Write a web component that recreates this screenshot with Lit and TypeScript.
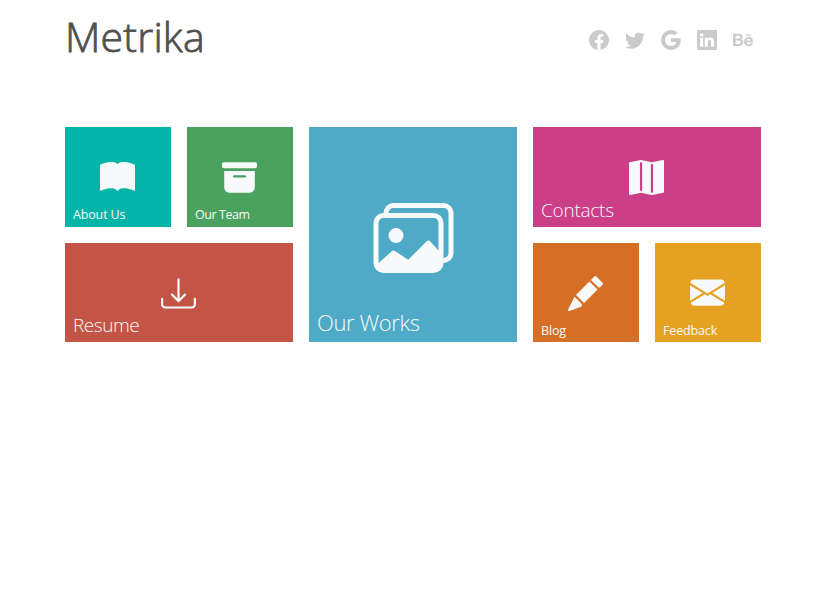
import { LitElement, html, css, svg } from "lit";
import { customElement, property } from "lit/decorators.js";

const ICONS: Record<string, string> = {
  book: "M8 1.783C7.015.936 5.587.81 4.287.94c-1.514.153-3.042.672-3.994 1.105A.5.5 0 0 0 0 2.5v11a.5.5 0 0 0 .707.455c.882-.4 2.303-.881 3.68-1.02 1.409-.142 2.59.087 3.223.877a.5.5 0 0 0 .78 0c.633-.79 1.814-1.019 3.222-.877 1.378.139 2.8.62 3.681 1.02A.5.5 0 0 0 16 13.5v-11a.5.5 0 0 0-.293-.455c-.952-.433-2.48-.952-3.994-1.105C10.413.809 8.985.936 8 1.783",
  archive: "M12.643 15C13.979 15 15 13.845 15 12.5V5H1v7.5C1 13.845 2.021 15 3.357 15zM5.5 7h5a.5.5 0 0 1 0 1h-5a.5.5 0 0 1 0-1M.8 1a.8.8 0 0 0-.8.8V3a.8.8 0 0 0 .8.8h14.4A.8.8 0 0 0 16 3V1.8a.8.8 0 0 0-.8-.8z",
  download: "M.5 9.9a.5.5 0 0 1 .5.5v2.5a1 1 0 0 0 1 1h12a1 1 0 0 0 1-1v-2.5a.5.5 0 0 1 1 0v2.5a2 2 0 0 1-2 2H2a2 2 0 0 1-2-2v-2.5a.5.5 0 0 1 .5-.5M7.646 11.854a.5.5 0 0 0 .708 0l3-3a.5.5 0 0 0-.708-.708L8.5 10.293V1.5a.5.5 0 0 0-1 0v8.793L5.354 8.146a.5.5 0 1 0-.708.708z",
  images: "M4.502 9a1.5 1.5 0 1 0 0-3 1.5 1.5 0 0 0 0 3M14.002 13a2 2 0 0 1-2 2h-10a2 2 0 0 1-2-2V5A2 2 0 0 1 2 3a2 2 0 0 1 2-2h10a2 2 0 0 1 2 2v8a2 2 0 0 1-1.998 2M14 2H4a1 1 0 0 0-1 1h9.002a2 2 0 0 1 2 2v7A1 1 0 0 0 15 11V3a1 1 0 0 0-1-1M2.002 4a1 1 0 0 0-1 1v8l2.646-2.354a.5.5 0 0 1 .63-.062l2.66 1.773 3.71-3.71a.5.5 0 0 1 .577-.094l1.777 1.947V5a1 1 0 0 0-1-1z",
  map: "M16 .5a.5.5 0 0 0-.598-.49L10.5.99 5.598.01a.5.5 0 0 0-.196 0l-5 1A.5.5 0 0 0 0 1.5v14a.5.5 0 0 0 .598.49l4.902-.98 4.902.98a.5.5 0 0 0 .196 0l5-1A.5.5 0 0 0 16 14.5zM5 14.09V1.11l.5-.1.5.1v12.98l-.402-.08a.5.5 0 0 0-.196 0zm5 .8V1.91l.402.08a.5.5 0 0 0 .196 0L11 1.91v12.98l-.5.1z",
  pencil: "M12.854.146a.5.5 0 0 0-.708 0L10.5 1.793 14.207 5.5l1.647-1.646a.5.5 0 0 0 0-.708zM13.5 6.207 9.793 2.5 3.622 8.671 7.329 12.378zM6.4 12.9 3 9.5.036 15.314a.5.5 0 0 0 .65.65L6.2 13.9z",
  envelope: "M.05 3.555A2 2 0 0 1 2 2h12a2 2 0 0 1 1.95 1.555L8 8.414zM0 4.697v7.104l5.803-3.558zM6.761 8.83l-6.57 4.027A2 2 0 0 0 2 14h12a2 2 0 0 0 1.808-1.144l-6.57-4.027L8 9.586zm3.436-.586L16 11.801V4.697z",
  facebook: "M16 8.049c0-4.446-3.582-8.05-8-8.05C3.58 0-.002 3.603-.002 8.05c0 4.017 2.926 7.347 6.75 7.951v-5.625h-2.03V8.05H6.75V6.275c0-2.017 1.195-3.131 3.022-3.131.876 0 1.791.157 1.791.157v1.98h-1.009c-.993 0-1.303.621-1.303 1.258v1.51h2.218l-.354 2.326H9.25V16c3.824-.604 6.75-3.934 6.75-7.951",
  twitter: "M5.026 15c6.038 0 9.341-5.003 9.341-9.334q.002-.211-.006-.422A6.7 6.7 0 0 0 16 3.542a6.7 6.7 0 0 1-1.889.518 3.3 3.3 0 0 0 1.447-1.817 6.5 6.5 0 0 1-2.087.793A3.286 3.286 0 0 0 7.875 6.03a9.32 9.32 0 0 1-6.767-3.429 3.29 3.29 0 0 0 1.018 4.382A3.3 3.3 0 0 1 .64 6.575v.045a3.29 3.29 0 0 0 2.632 3.218 3.2 3.2 0 0 1-.865.115 3 3 0 0 1-.614-.057 3.28 3.28 0 0 0 3.067 2.277A6.6 6.6 0 0 1 .78 13.58a6 6 0 0 1-.78-.045A9.34 9.34 0 0 0 5.026 15",
  google: "M15.545 6.558a9.4 9.4 0 0 1 .139 1.626c0 2.434-.87 4.492-2.384 5.885h.002C11.978 15.292 10.158 16 8 16A8 8 0 1 1 8 0a7.7 7.7 0 0 1 5.352 2.082l-2.284 2.284A4.35 4.35 0 0 0 8 3.166c-2.087 0-3.86 1.408-4.492 3.304a4.8 4.8 0 0 0 0 3.063h.003c.635 1.893 2.405 3.301 4.492 3.301 1.078 0 2.004-.276 2.722-.764h-.003a3.7 3.7 0 0 0 1.599-2.431H8v-3.08z",
  linkedin: "M0 1.146C0 .513.526 0 1.175 0h13.65C15.474 0 16 .513 16 1.146v13.708c0 .633-.526 1.146-1.175 1.146H1.175C.526 16 0 15.487 0 14.854zm4.943 12.248V6.169H2.542v7.225zm-1.2-8.212c.837 0 1.358-.554 1.358-1.248-.015-.709-.52-1.248-1.342-1.248S2.4 3.226 2.4 3.934c0 .694.521 1.248 1.327 1.248zm4.908 8.212V9.359c0-.216.016-.432.08-.586.173-.431.568-.878 1.232-.878.869 0 1.216.662 1.216 1.634v3.865h2.401V9.25c0-2.22-1.184-3.252-2.764-3.252-1.274 0-1.845.7-2.165 1.193v.025h-.016l.016-.025V6.169h-2.4c.03.678 0 7.225 0 7.225z",
  behance: "M4.654 3c.461 0 .887.035 1.278.14.39.07.711.216.996.391s.497.426.641.747c.14.32.216.711.216 1.137 0 .496-.106.922-.356 1.242-.215.32-.566.606-.997.817.606.176 1.067.496 1.348.922s.461.957.461 1.563c0 .496-.105.922-.285 1.278a2.3 2.3 0 0 1-.782.887c-.32.215-.711.39-1.137.496a5.3 5.3 0 0 1-1.278.176L0 12.803V3zm-.285 3.978c.39 0 .71-.105.957-.285.246-.18.355-.497.355-.887 0-.216-.035-.426-.105-.567a1 1 0 0 0-.32-.355 1.8 1.8 0 0 0-.461-.176c-.176-.035-.356-.035-.567-.035H2.17v2.31c0-.005 2.2-.005 2.2-.005zm.105 4.193c.215 0 .426-.035.606-.07.176-.035.356-.106.496-.216s.25-.215.356-.39c.07-.176.14-.391.14-.641 0-.496-.14-.852-.426-1.102-.285-.215-.676-.32-1.137-.32H2.17v2.734h2.305zm6.858-.035q.428.427 1.278.426c.39 0 .746-.106 1.032-.286q.426-.32.53-.64h1.74c-.286.851-.712 1.457-1.278 1.848-.566.355-1.243.566-2.06.566a4.1 4.1 0 0 1-1.527-.285 2.8 2.8 0 0 1-1.137-.782 2.85 2.85 0 0 1-.712-1.172c-.175-.461-.25-.957-.25-1.528 0-.531.07-1.032.25-1.493.18-.46.426-.852.747-1.207.32-.32.711-.606 1.137-.782a4 4 0 0 1 1.493-.285c.606 0 1.137.105 1.598.355.46.25.817.532 1.102.958.285.39.496.851.641 1.348.07.496.105.996.07 1.563h-5.15c0 .58.21 1.11.496 1.396m2.24-3.732c-.25-.25-.642-.391-1.103-.391-.32 0-.566.07-.781.176s-.356.25-.496.39a.96.96 0 0 0-.25.497c-.036.175-.07.32-.07.46h3.196c-.07-.526-.25-.882-.497-1.132zm-3.127-3.728h3.978v.957h-3.978z",
};

@customElement("glyph-icon")
class GlyphIcon extends LitElement {
  @property() name = "";
  static styles = css`
    :host { display: block; width: 20px; height: 20px; }
    .glyph { display: block; width: 100%; height: 100%; overflow: visible; fill: currentColor; }
  `;
  render() {
    return html`<svg class="glyph" viewBox="0 0 16 16" aria-hidden="true">${svg`<path fill-rule="evenodd" d=${ICONS[this.name] ?? ""}></path>`}</svg>`;
  }
}

interface Tile { id: string; label: string; icon: string; size: string; }

const TILES: Tile[] = [
  { id: "about", label: "About Us", icon: "book", size: "small" },
  { id: "team", label: "Our Team", icon: "archive", size: "small" },
  { id: "works", label: "Our Works", icon: "images", size: "large" },
  { id: "contacts", label: "Contacts", icon: "map", size: "wide" },
  { id: "resume", label: "Resume", icon: "download", size: "wide" },
  { id: "blog", label: "Blog", icon: "pencil", size: "small" },
  { id: "feedback", label: "Feedback", icon: "envelope", size: "small" },
];

const SOCIALS = ["facebook", "twitter", "google", "linkedin", "behance"];

@customElement("app-root")
class AppRoot extends LitElement {
  static styles = css`
    :host {
      display: block;
      box-sizing: border-box;
      min-height: 596px;
      padding: 0 63px 0 65px;
      background: #fff;
      font-family: "Open Sans", "Noto Sans", sans-serif;
    }
    .header { display: flex; justify-content: space-between; align-items: center; height: 80px; }
    .title { margin: 0; padding-bottom: 8px; color: #505050; font-size: 41px; font-weight: 300; line-height: 56px; letter-spacing: 0.2px; -webkit-text-stroke: 0.8px #505050; }
    .socials { display: flex; gap: 16px; padding-right: 8px; color: #cbcbcb; }
    .board {
      display: grid;
      grid-template-columns: 106px 106px 208px 106px 106px;
      grid-template-rows: 100px 99px;
      grid-template-areas: "about team works contacts contacts" "resume resume works blog feedback";
      gap: 16px;
      margin-top: 47px;
    }
    .tile { position: relative; display: flex; align-items: center; justify-content: center; color: #f8f9fa; }
    .icon { width: 35px; height: 35px; margin-right: 0.4px; }
    .large .icon { width: 81px; height: 80px; margin: 6px 0 0; }
    .label { position: absolute; left: 8px; white-space: nowrap; }
    .small .label { bottom: 4px; font-size: 12.5px; line-height: 17px; letter-spacing: -0.15px; }
    .wide .label { bottom: 4px; font-size: 19px; line-height: 26px; font-weight: 300; letter-spacing: -0.25px; }
    .large .label { bottom: 5px; font-size: 22px; line-height: 30px; font-weight: 300; letter-spacing: -0.38px; }
    .team .label { letter-spacing: -0.45px; }
    .resume .label { letter-spacing: -0.45px; }
    .blog .label, .feedback .label { bottom: 3px; }
    .about { grid-area: about; background: #03b4a8; }
    .team { grid-area: team; background: #4aa25f; }
    .works { grid-area: works; background: #4eaac7; }
    .contacts { grid-area: contacts; background: #ca3f88; }
    .resume { grid-area: resume; background: #c45446; }
    .blog { grid-area: blog; background: #d66f26; }
    .feedback { grid-area: feedback; background: #e5a122; }
    .resume .icon, .blog .icon { margin-top: 1px; }
  `;
  render() {
    return html`
      <header class="header">
        <h1 class="title">Metrika</h1>
        <nav class="socials">${SOCIALS.map((name) => html`<glyph-icon name=${name}></glyph-icon>`)}</nav>
      </header>
      <main class="board">
        ${TILES.map((t) => html`
          <div class="tile ${t.size} ${t.id}">
            <glyph-icon class="icon" name=${t.icon}></glyph-icon>
            <span class="label">${t.label}</span>
          </div>`)}
      </main>
    `;
  }
}
